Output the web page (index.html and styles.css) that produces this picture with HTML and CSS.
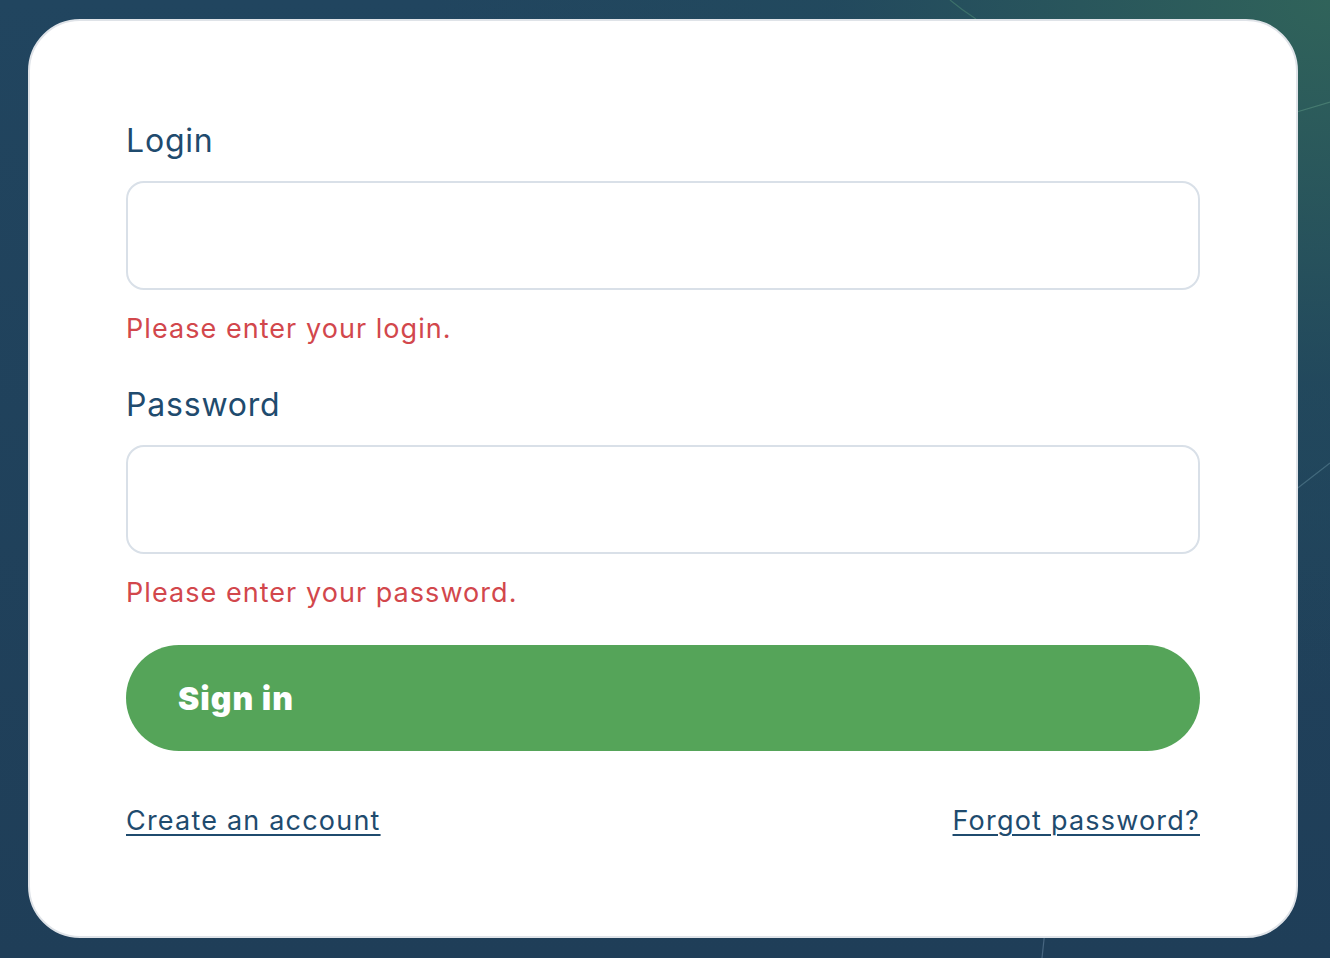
FILE: index.html
```html
<!DOCTYPE html>
<html lang="en">
<head>
<meta charset="utf-8">
<title>Sign in</title>
<link rel="stylesheet" href="styles.css">
</head>
<body>
<svg class="backdrop" width="1330" height="958" viewBox="0 0 1330 958" aria-hidden="true">
  <path d="M950 0 Q962 10 976 19" fill="none" stroke="#4f8a74" stroke-opacity="0.55" stroke-width="1.2"/>
  <path d="M1290 114 L1330 102" fill="none" stroke="#5f9a86" stroke-opacity="0.5" stroke-width="1.2"/>
  <path d="M1290 494 L1330 463" fill="none" stroke="#6a94a4" stroke-opacity="0.45" stroke-width="1.2"/>
  <path d="M1045 930 L1042 958" fill="none" stroke="#6f8ea8" stroke-opacity="0.5" stroke-width="1.2"/>
</svg>
<main class="card">
  <form class="form" novalidate>
    <div class="field">
      <label class="label" for="login">Login</label>
      <input class="input" id="login" type="text">
      <p class="error">Please enter your login.</p>
    </div>
    <div class="field">
      <label class="label" for="password">Password</label>
      <input class="input" id="password" type="password">
      <p class="error">Please enter your password.</p>
    </div>
    <button class="submit" type="button">Sign in</button>
    <div class="links">
      <a class="link" href="#">Create an account</a>
      <a class="link" href="#">Forgot password?</a>
    </div>
  </form>
</main>
</body>
</html>
```
FILE: styles.css
```css
html, body {
  margin: 0;
  height: 100%;
}
body {
  position: relative;
  overflow: hidden;
  font-family: Inter, "Open Sans", "Liberation Sans", sans-serif;
  background:
    radial-gradient(ellipse 900px 700px at 100% 0%, #30635a 0%, rgba(35, 76, 93, 0.6) 55%, rgba(31, 63, 89, 0) 100%),
    linear-gradient(180deg, #21455f 0%, #1f3e58 100%);
  padding: 19px 32px 20px 28px;
  box-sizing: border-box;
}
.backdrop {
  position: absolute;
  left: 0;
  top: 0;
  pointer-events: none;
}
.card {
  position: relative;
  box-sizing: border-box;
  height: 919px;
  background: #ffffff;
  border: 2px solid #dfe3e8;
  border-radius: 52px;
  padding: 100px 96px 0 96px;
}
.form {
  display: flex;
  flex-direction: column;
}
.field {
  display: flex;
  flex-direction: column;
}
.label {
  font-size: 32px;
  line-height: 40px;
  color: #1f4b6e;
  letter-spacing: 0.8px;
  margin-bottom: 20px;
}
.input {
  box-sizing: border-box;
  height: 109px;
  border: 2px solid #d9e0e8;
  border-radius: 18px;
  background: #fff;
  margin: 0;
  font: inherit;
}
.error {
  margin: 21px 0 38px;
  font-size: 27px;
  line-height: 36px;
  color: #d2474c;
  letter-spacing: 1.05px;
}
.submit {
  box-sizing: border-box;
  height: 106px;
  margin-top: -4px;
  border: none;
  border-radius: 53px;
  background: #55a459;
  color: #ffffff;
  font: inherit;
  font-size: 32px;
  font-weight: 900;
  letter-spacing: 1px;
  text-align: left;
  padding: 0 0 0 52px;
}
.links {
  display: flex;
  justify-content: space-between;
  margin-top: 52px;
}
.link {
  font-size: 27px;
  line-height: 36px;
  color: #1f4b6e;
  letter-spacing: 1.2px;
  text-decoration: underline;
  text-decoration-thickness: 2px;
  text-underline-offset: 4px;
}
```
